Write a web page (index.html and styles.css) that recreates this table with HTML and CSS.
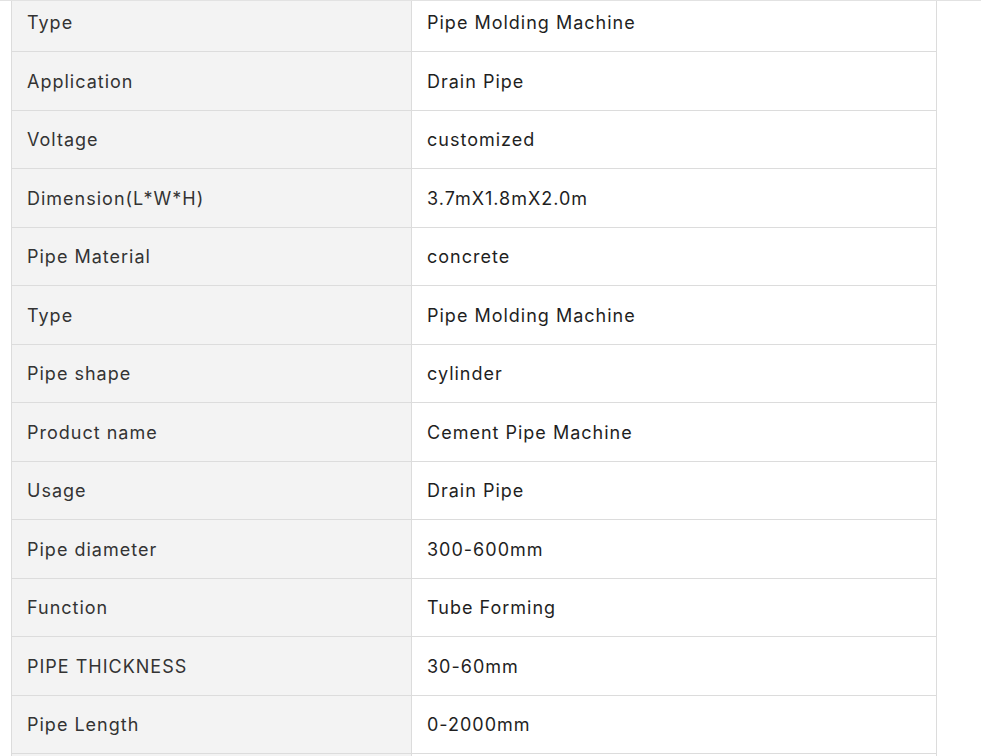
FILE: index.html
```html
<!DOCTYPE html>
<html>
<head>
<meta charset="utf-8">
<link rel="stylesheet" href="styles.css">
</head>
<body>
<div class="viewport">
  <table class="specs">
    <tbody>
      <tr><td class="label">Type</td><td class="value">Pipe Molding Machine</td></tr>
      <tr><td class="label">Application</td><td class="value">Drain Pipe</td></tr>
      <tr><td class="label">Voltage</td><td class="value">customized</td></tr>
      <tr><td class="label">Dimension(L*W*H)</td><td class="value">3.7mX1.8mX2.0m</td></tr>
      <tr><td class="label">Pipe Material</td><td class="value">concrete</td></tr>
      <tr><td class="label">Type</td><td class="value">Pipe Molding Machine</td></tr>
      <tr><td class="label">Pipe shape</td><td class="value">cylinder</td></tr>
      <tr><td class="label">Product name</td><td class="value">Cement Pipe Machine</td></tr>
      <tr><td class="label">Usage</td><td class="value">Drain Pipe</td></tr>
      <tr><td class="label">Pipe diameter</td><td class="value">300-600mm</td></tr>
      <tr><td class="label">Function</td><td class="value">Tube Forming</td></tr>
      <tr><td class="label">PIPE THICKNESS</td><td class="value">30-60mm</td></tr>
      <tr><td class="label">Pipe Length</td><td class="value">0-2000mm</td></tr>
      <tr class="stub"><td class="label"></td><td class="value"></td></tr>
    </tbody>
  </table>
</div>
</body>
</html>
```

FILE: styles.css
```css
html, body {
  margin: 0;
  padding: 0;
  background: #fff;
}
body {
  font-family: Inter, "Liberation Sans", sans-serif;
  height: 756px;
  overflow: hidden;
}
.viewport {
  border-top: 1px solid #e2e2e2;
  height: 755px;
  overflow: hidden;
  padding-left: 11px;
}
.specs {
  margin-top: -8.5px;
  width: 926px;
  border-collapse: collapse;
  table-layout: fixed;
  font-size: 18px;
  letter-spacing: 1px;
}
.specs td {
  border: 1px solid #dcdcdc;
  padding: 15.5px 15px 14.5px;
  line-height: 27.5px;
  text-align: left;
  vertical-align: middle;
}
.specs .label {
  width: 369px;
  background: #f3f3f3;
  color: #333;
}
.specs .value {
  color: #1f1f1f;
}
.specs .stub td {
  height: 20px;
}
```
